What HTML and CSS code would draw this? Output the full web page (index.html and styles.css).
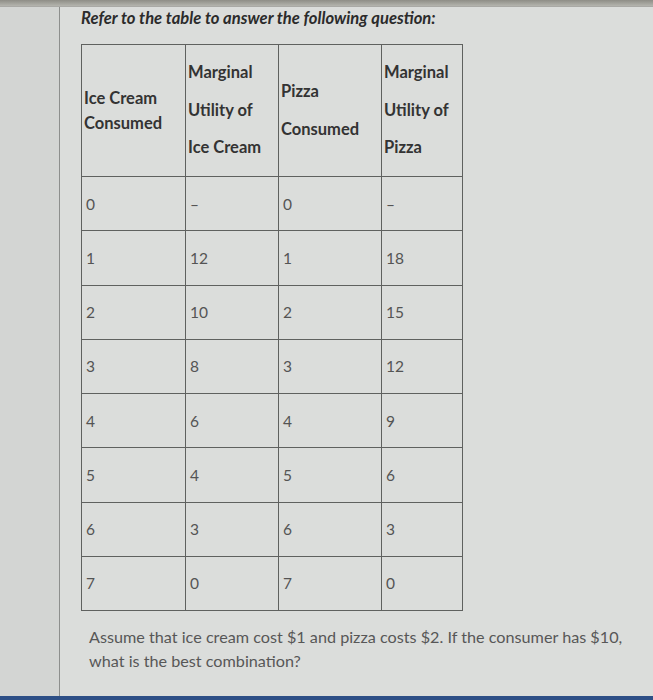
FILE: index.html
```html
<!DOCTYPE html>
<html>
<head>
<meta charset="utf-8">
<link rel="stylesheet" href="styles.css">
</head>
<body>
<div class="topbar"></div>
<div class="screen">
  <div class="gutter"></div>
  <div class="card">
    <h2 class="title">Refer to the table to answer the following question:</h2>
    <table class="mu">
      <colgroup>
        <col class="c1"><col class="c2"><col class="c3"><col class="c4">
      </colgroup>
      <thead>
        <tr>
          <th><div class="h-tight">Ice Cream<br>Consumed</div></th>
          <th><div class="h-loose">Marginal<br>Utility of<br>Ice Cream</div></th>
          <th><div class="h-loose">Pizza<br>Consumed</div></th>
          <th><div class="h-loose">Marginal<br>Utility of<br>Pizza</div></th>
        </tr>
      </thead>
      <tbody>
        <tr><td>0</td><td>–</td><td>0</td><td>–</td></tr>
        <tr><td>1</td><td>12</td><td>1</td><td>18</td></tr>
        <tr><td>2</td><td>10</td><td>2</td><td>15</td></tr>
        <tr><td>3</td><td>8</td><td>3</td><td>12</td></tr>
        <tr><td>4</td><td>6</td><td>4</td><td>9</td></tr>
        <tr><td>5</td><td>4</td><td>5</td><td>6</td></tr>
        <tr><td>6</td><td>3</td><td>6</td><td>3</td></tr>
        <tr><td>7</td><td>0</td><td>7</td><td>0</td></tr>
      </tbody>
    </table>
    <p class="question">Assume that ice cream cost $1 and pizza costs $2. If the consumer has $10, what is the best combination?</p>
  </div>
</div>
<div class="bottombar"></div>
</body>
</html>
```
FILE: styles.css
```css
html, body {
  margin: 0;
  padding: 0;
}
body {
  height: 700px;
  display: flex;
  flex-direction: column;
  background: #d9dbd9;
  font-family: Lato, "Open Sans", sans-serif;
  overflow: hidden;
}
.topbar {
  height: 6px;
  background: linear-gradient(#8e8d86, #b4b4ae);
  border-bottom: 1px solid #a9a9a5;
  flex: none;
}
.screen {
  flex: 1;
  display: flex;
}
.gutter {
  width: 59px;
  flex: none;
  background: #d3d5d3;
}
.card {
  flex: 1;
  border-left: 1px solid #8d8f8d;
  padding-left: 21px;
  background: #dbdddb;
}
.title {
  margin: 0;
  padding-top: 1px;
  font-size: 16.6px;
  font-style: italic;
  font-weight: 700;
  color: #2b2b2b;
  line-height: 20px;
}
.mu {
  margin-top: 16px;
  border-collapse: collapse;
  color: #545454;
  font-size: 15.5px;
}
.mu .c1 { width: 104px; }
.mu .c2 { width: 93px; }
.mu .c3 { width: 103px; }
.mu .c4 { width: 81px; }
.mu th, .mu td {
  border: 1px solid #5f615f;
  text-align: left;
  padding: 0 0 0 2px;
}
.mu th {
  height: 131px;
  vertical-align: middle;
  font-weight: 700;
  font-size: 16.5px;
  color: #333;
}
.h-tight { line-height: 25px; }
.h-loose { line-height: 37.5px; }
.mu td {
  height: 53.25px;
  vertical-align: middle;
  padding-left: 4px;
}
.question {
  margin: 14px 0 0 8px;
  width: 545px;
  font-size: 16.2px;
  line-height: 24px;
  color: #575757;
}
.bottombar {
  height: 4px;
  flex: none;
  background: #2d4f86;
}
```
